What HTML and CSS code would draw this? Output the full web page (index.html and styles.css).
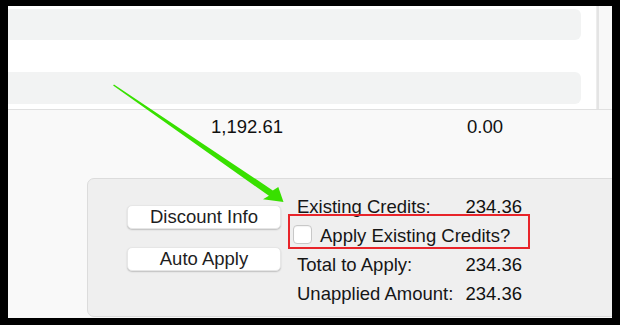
FILE: index.html
```html
<!DOCTYPE html>
<html>
<head>
  <title>Apply Credits</title>
  <link rel="stylesheet" href="styles.css">
</head>
<body>
  <div class="screen">
    <div class="grid-area">
      <div class="rows">
        <div class="row-bar"></div>
        <div class="row-bar"></div>
      </div>
      <div class="divider"></div>
      <div class="gutter"></div>
    </div>

    <div class="lower">
      <div class="totals">
        <span class="total-cell first">1,192.61</span>
        <span class="total-cell second">0.00</span>
      </div>

      <div class="panel">
        <div class="actions">
          <button class="mac-button">Discount Info</button>
          <button class="mac-button">Auto Apply</button>
        </div>

        <div class="summary">
          <div class="summary-row">
            <span class="label">Existing Credits:</span>
            <span class="value">234.36</span>
          </div>
          <label class="summary-row check-row">
            <span class="checkbox"></span>
            <span>Apply Existing Credits?</span>
          </label>
          <div class="summary-row">
            <span class="label">Total to Apply:</span>
            <span class="value">234.36</span>
          </div>
          <div class="summary-row">
            <span class="label">Unapplied Amount:</span>
            <span class="value">234.36</span>
          </div>
        </div>
      </div>
    </div>
  </div>

  <!-- annotation overlays -->
  <div class="highlight-box"></div>
  <svg class="arrow" viewBox="0 0 620 325" width="620" height="325">
    <polygon points="113.1,85.5 114,84.4 272.8,190.4 278.3,187 283.5,202 263,199.2 268.9,195.8" fill="#38e000"/>
  </svg>
</body>
</html>
```

FILE: styles.css
```css
/* Apply credits panel */

body {
  margin: 0;
  background-color: #000;
  font-family: "Liberation Sans", Arial, sans-serif;
  font-size: 18.5px;
  color: #161616;
}

.screen {
  width: 604px;
  height: 312px;
  margin: 6px 8px 0 8px;
  background-color: #f9f9f9;
  overflow: hidden;
}

/* top table area */

.grid-area {
  display: flex;
  height: 103px;
  background-color: #fff;
  border-bottom: 1px solid #e0e0e0;
}

.rows {
  flex: 1;
  display: flex;
  flex-direction: column;
  gap: 32px;
  padding: 3px 15px 0 0;
}

.row-bar {
  height: 31px;
  margin-left: -8px;
  background-color: #f2f3f3;
  border-radius: 6px;
}

.row-bar + .row-bar {
  height: 32px;
}

.divider {
  width: 3px;
  background-color: #e4e4e4;
  border-left: 1px solid #ededed;
  box-sizing: border-box;
}

.gutter {
  width: 13px;
  background-color: #f8f8f8;
}

/* totals line */

.totals {
  display: flex;
  padding-top: 6px;
  line-height: 21px;
  color: #111;
}

.total-cell {
  text-align: right;
}

.total-cell.first {
  width: 275px;
}

.total-cell.second {
  width: 220px;
}

/* bottom panel */

.panel {
  display: flex;
  align-items: flex-start;
  box-sizing: border-box;
  height: 139px;
  margin: 41px -10px 0 79px;
  background-color: #efefef;
  border: 1px solid #dcdcdc;
  border-radius: 7px;
}

.actions {
  display: flex;
  flex-direction: column;
  gap: 18px;
  width: 154px;
  margin-left: 39px;
  padding-top: 26px;
}

.mac-button {
  height: 24px;
  padding: 0;
  font-family: inherit;
  font-size: 18.5px;
  line-height: 22px;
  color: #1e1e1e;
  background-color: #fff;
  border: 1px solid #e6e6e6;
  border-radius: 5px;
  box-shadow: 0 1px 1.5px rgba(0, 0, 0, 0.2);
}

.summary {
  width: 229px;
  margin-left: 12px;
  padding-top: 13px;
}

.summary-row {
  display: flex;
  justify-content: space-between;
  align-items: center;
  height: 29px;
  line-height: 29px;
}

.summary-row .label {
  padding-left: 4px;
}

.summary-row .value {
  color: #111;
}

.check-row {
  justify-content: flex-start;
}

.checkbox {
  width: 19px;
  height: 19px;
  margin: -2px 8px 0 0;
  box-sizing: border-box;
  background-color: #fff;
  border: 1px solid #c8c8c8;
  border-radius: 4px;
  box-shadow: inset 0 1px 1px rgba(0, 0, 0, 0.05);
}

/* annotations */

.highlight-box {
  position: absolute;
  left: 288px;
  top: 214px;
  width: 242px;
  height: 35px;
  box-sizing: border-box;
  border: 2px solid #e8242a;
}

.arrow {
  position: absolute;
  left: 0;
  top: 0;
  pointer-events: none;
}
```
